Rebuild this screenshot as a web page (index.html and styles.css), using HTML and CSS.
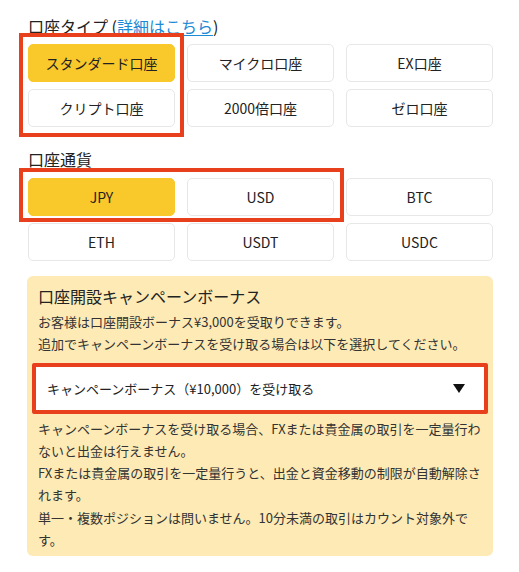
FILE: index.html
```html
<!DOCTYPE html>
<html lang="ja">
<head>
<meta charset="utf-8">
<link rel="stylesheet" href="styles.css">
</head>
<body>
<section class="group">
  <h2 class="title">口座タイプ (<a class="link" href="#">詳細はこちら</a>)</h2>
  <div class="grid type-grid">
    <button class="opt selected">スタンダード口座</button>
    <button class="opt">マイクロ口座</button>
    <button class="opt">EX口座</button>
    <button class="opt">クリプト口座</button>
    <button class="opt">2000倍口座</button>
    <button class="opt">ゼロ口座</button>
    <div class="mark mark-type"></div>
  </div>
</section>
<section class="group">
  <h2 class="title">口座通貨</h2>
  <div class="grid cur-grid">
    <button class="opt selected">JPY</button>
    <button class="opt">USD</button>
    <button class="opt">BTC</button>
    <button class="opt">ETH</button>
    <button class="opt">USDT</button>
    <button class="opt">USDC</button>
    <div class="mark mark-cur"></div>
  </div>
</section>
<section class="bonus">
  <h3 class="bonus-title">口座開設キャンペーンボーナス</h3>
  <p class="txt">お客様は口座開設ボーナス¥3,000を受取りできます。<br>追加でキャンペーンボーナスを受け取る場合は以下を選択してください。</p>
  <div class="select-wrap">
    <div class="select">
      <span>キャンペーンボーナス（¥10,000）を受け取る</span>
      <svg class="arrow" width="12" height="9" viewBox="0 0 12 9"><path d="M0 0H12L6 9Z" fill="#111"/></svg>
    </div>
  </div>
  <p class="txt notes">キャンペーンボーナスを受け取る場合、FXまたは貴金属の取引を一定量行わないと出金は行えません。<br>FXまたは貴金属の取引を一定量行うと、出金と資金移動の制限が自動解除されます。<br>単一・複数ポジションは問いません。10分未満の取引はカウント対象外です。</p>
</section>
</body>
</html>
```

FILE: styles.css
```css
* { box-sizing: border-box; }
html, body { margin: 0; padding: 0; background: #fff; }
body {
  font-family: "Noto Sans CJK JP", "Noto Sans", sans-serif;
  color: #222;
  padding: 14px 26px 0 28px;
  width: 519px;
}
.group { margin: 0; }
.title {
  margin: 0;
  font-size: 16px;
  font-weight: 400;
  line-height: 24px;
  color: #222;
}
.link { color: #1c8ad4; text-decoration: underline; text-underline-offset: 2px; }
.grid {
  position: relative;
  display: grid;
  grid-template-columns: 147px 147px 147px;
  column-gap: 12px;
  row-gap: 7px;
}
.type-grid { margin-top: 6px; margin-bottom: 20px; }
.cur-grid { margin-top: 7px; margin-bottom: 15px; }
.opt {
  height: 38px;
  border: 1px solid #e7e7e7;
  border-radius: 5px;
  background: #fff;
  font-family: inherit;
  font-size: 14px;
  color: #222;
  padding: 0;
}
.opt.selected { background: #f9c82b; border-color: #f9c82b; }
.mark {
  position: absolute;
  border: 4px solid #e8401c;
  pointer-events: none;
}
.mark-type { left: -9px; top: -11px; width: 165px; height: 104px; }
.mark-cur { left: -9px; top: -10px; width: 325px; height: 54px; }
.bonus {
  width: 466px;
  margin-left: -1px;
  background: #fdeab5;
  border-radius: 6px;
  padding: 8px 7px 5px 11px;
}
.bonus-title {
  margin: 0;
  font-size: 16px;
  font-weight: 400;
  line-height: 24px;
  color: #222;
}
.txt {
  margin: 3px 0 0;
  font-size: 13px;
  line-height: 22.3px;
  color: #333;
}
.select-wrap {
  margin: 7px 0 0 -6px;
  width: 456px;
  border: 4px solid #e8401c;
  border-radius: 2px;
}
.select {
  height: 43px;
  background: #fff;
  display: flex;
  align-items: center;
  justify-content: space-between;
  padding: 0 19px 0 11px;
  font-size: 13px;
  color: #222;
}
.arrow { display: block; }
.notes { margin-top: 4px; }
```
